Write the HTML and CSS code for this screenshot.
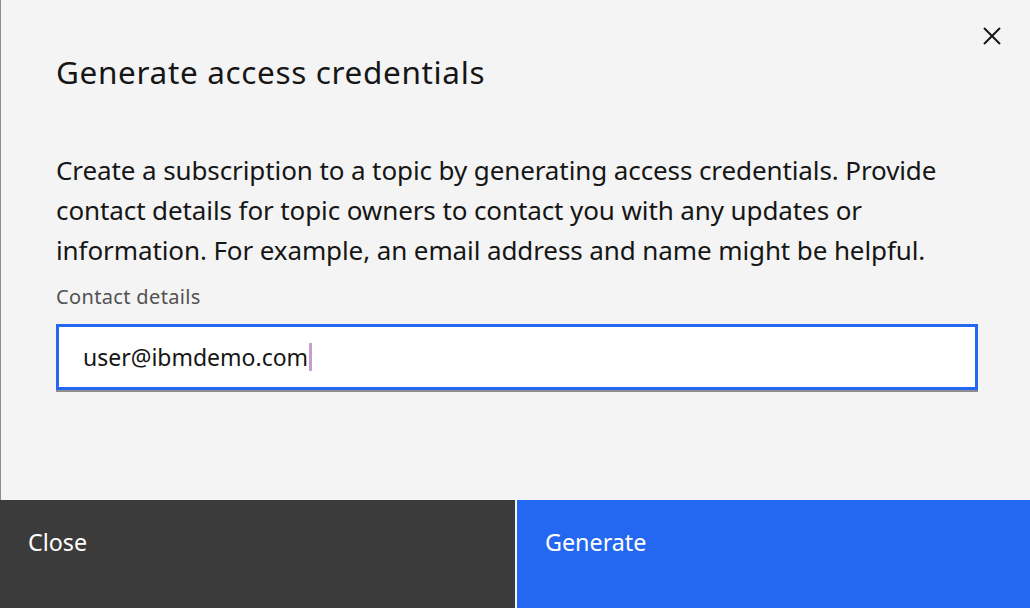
FILE: index.html
```html
<!DOCTYPE html>
<html lang="en">
<head>
<meta charset="utf-8">
<title>Generate access credentials</title>
<link rel="stylesheet" href="styles.css">
</head>
<body>
<div class="modal">
  <div class="content">
    <button class="close-x" aria-label="Close">
      <svg width="20" height="20" viewBox="0 0 20 20" aria-hidden="true"><path d="M2 2 L18 18 M18 2 L2 18" stroke="#161616" stroke-width="2" fill="none"/></svg>
    </button>
    <h2 class="title">Generate access credentials</h2>
    <p class="desc">Create a subscription to a topic by generating access credentials. Provide contact details for topic owners to contact you with any updates or information. For example, an email address and name might be helpful.</p>
    <label class="label">Contact details</label>
    <div class="field">
      <span class="value">user@ibmdemo.com</span><span class="caret"></span>
    </div>
  </div>
  <div class="footer">
    <div class="btn btn-secondary">Close</div>
    <div class="btn btn-primary">Generate</div>
  </div>
</div>
</body>
</html>
```
FILE: styles.css
```css
* { box-sizing: border-box; }
html, body { margin: 0; padding: 0; }
body {
  background: #f4f4f4;
  font-family: "Noto Sans", "Open Sans", sans-serif;
  color: #161616;
}
.modal {
  width: 1030px;
  height: 608px;
  display: flex;
  flex-direction: column;
}
.content {
  position: relative;
  flex: 1;
  border-left: 1px solid #8d8d8d;
  padding: 0 52px 0 55px;
}
.close-x {
  position: absolute;
  top: 26px;
  right: 28px;
  width: 20px;
  height: 20px;
  padding: 0;
  border: 0;
  background: none;
  display: flex;
}
.title {
  margin: 0;
  padding-top: 50px;
  font-size: 31.5px;
  line-height: 44px;
  font-weight: 400;
  letter-spacing: 0.65px;
}
.desc {
  margin: 0;
  padding-top: 56px;
  font-size: 26px;
  line-height: 40px;
  font-weight: 400;
  letter-spacing: -0.1px;
}
.label {
  display: block;
  margin-top: 14px;
  font-size: 20px;
  line-height: 26px;
  color: #525252;
  letter-spacing: 0.35px;
}
.field {
  margin-top: 14px;
  height: 66px;
  background: #fff;
  border: 3px solid #2468f2;
  box-shadow: 0 2px 0 #8d8d8d;
  display: flex;
  align-items: center;
  padding-left: 24px;
}
.value {
  font-size: 23px;
  color: #161616;
}
.caret {
  width: 3px;
  height: 28px;
  background: #c4a1cc;
  margin-left: 1px;
}
.footer {
  height: 108px;
  display: grid;
  grid-template-columns: 515px 1fr;
  gap: 2px;
  background: #f4f4f4;
}
.btn {
  padding: 26px 28px;
  font-size: 23.3px;
  line-height: 32px;
  color: #fff;
}
.btn-secondary { background: #3b3b3b; }
.btn-primary { background: #2468f2; }
```
